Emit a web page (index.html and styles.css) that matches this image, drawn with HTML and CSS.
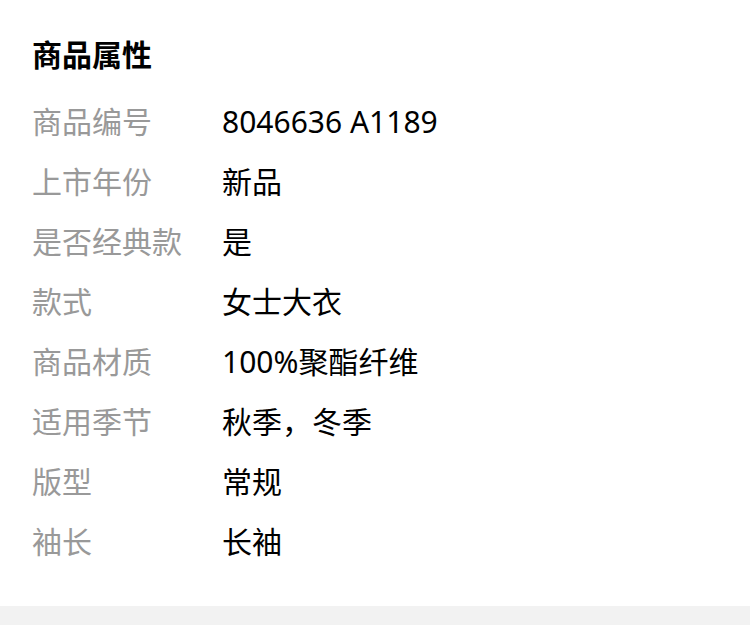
FILE: index.html
```html
<!DOCTYPE html>
<html lang="zh">
<head>
<meta charset="utf-8">
<link rel="stylesheet" href="styles.css">
</head>
<body>
<section class="attrs">
  <h2 class="title">商品属性</h2>
  <dl class="list">
    <div class="row"><dt>商品编号</dt><dd>8046636 A1189</dd></div>
    <div class="row"><dt>上市年份</dt><dd>新品</dd></div>
    <div class="row"><dt>是否经典款</dt><dd>是</dd></div>
    <div class="row"><dt>款式</dt><dd>女士大衣</dd></div>
    <div class="row"><dt>商品材质</dt><dd>100%聚酯纤维</dd></div>
    <div class="row"><dt>适用季节</dt><dd>秋季，冬季</dd></div>
    <div class="row"><dt>版型</dt><dd>常规</dd></div>
    <div class="row"><dt>袖长</dt><dd>长袖</dd></div>
  </dl>
</section>
<div class="band"></div>
</body>
</html>
```
FILE: styles.css
```css
html, body {
  margin: 0;
  padding: 0;
  background: #fff;
}
body {
  font-family: "Noto Sans", "Noto Sans CJK SC", sans-serif;
  width: 750px;
}
.attrs {
  padding: 30px 0 34px 32px;
}
.title {
  margin: 0 0 12px 0;
  font-size: 30px;
  line-height: 50px;
  font-weight: 700;
  color: #000;
}
.list {
  margin: 0;
  padding: 0;
}
.row {
  display: grid;
  grid-template-columns: 190px 1fr;
  height: 60px;
  align-items: center;
}
.row dt {
  font-size: 30px;
  color: #999;
  line-height: 40px;
}
.row dd {
  margin: 0;
  font-size: 30px;
  color: #000;
  line-height: 40px;
}
.band {
  height: 19px;
  background: #f2f2f2;
}
```
